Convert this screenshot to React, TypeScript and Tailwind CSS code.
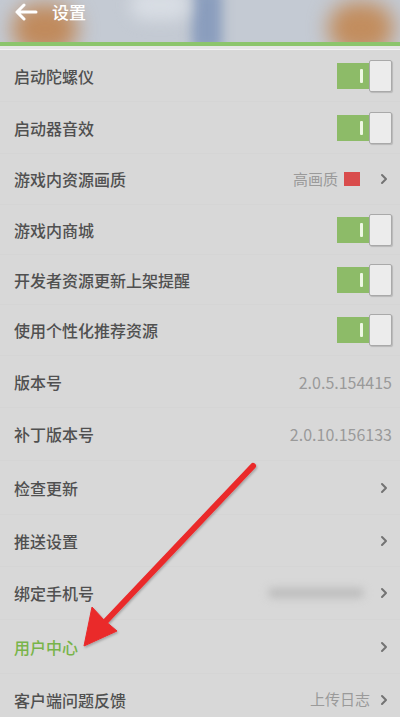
import { ChevronRight } from "lucide-react";

type Row = {
  label: string;
  kind: "toggle" | "value" | "link";
  h: string;
  value?: string;
  green?: boolean;
  quality?: boolean;
  blur?: boolean;
};

const rows: Row[] = [
  { label: "启动陀螺仪", kind: "toggle", h: "h-[52px]" },
  { label: "启动器音效", kind: "toggle", h: "h-[52px]" },
  { label: "游戏内资源画质", kind: "link", value: "高画质", quality: true, h: "h-[51px]" },
  { label: "游戏内商城", kind: "toggle", h: "h-[50px]" },
  { label: "开发者资源更新上架提醒", kind: "toggle", h: "h-[50px]" },
  { label: "使用个性化推荐资源", kind: "toggle", h: "h-[51px]" },
  { label: "版本号", kind: "value", value: "2.0.5.154415", h: "h-[52px]" },
  { label: "补丁版本号", kind: "value", value: "2.0.10.156133", h: "h-[53px]" },
  { label: "检查更新", kind: "link", h: "h-[54px]" },
  { label: "推送设置", kind: "link", h: "h-[52px]" },
  { label: "绑定手机号", kind: "link", blur: true, h: "h-[53px]" },
  { label: "用户中心", kind: "link", green: true, h: "h-[54px]" },
  { label: "客户端问题反馈", kind: "link", value: "上传日志", h: "h-[52px]" },
];

function Toggle() {
  return (
    <div className="flex items-center">
      <div className="w-[33px] h-[26px] bg-[#8dbb68] flex items-center justify-end pr-[7px]">
        <div className="w-[3px] h-[14px] bg-[#eef7e2] rounded-[1px]" />
      </div>
      <div className="w-[23px] h-[32px] bg-[#ececec] border border-[#a9a9a9] rounded-[2px] -ml-[1px] shadow-[1px_1px_1px_rgba(0,0,0,0.15)]" />
    </div>
  );
}

function Chevron() {
  return <ChevronRight className="w-[16px] h-[16px] text-[#737373]" strokeWidth={3} />;
}

function Arrow() {
  // annotation arrow drawn over the list
  return (
    <svg className="absolute left-0 top-0 pointer-events-none" width="400" height="717">
      <defs>
        <filter id="sh" x="-10%" y="-10%" width="120%" height="120%">
          <feDropShadow dx="1" dy="1.5" stdDeviation="1.2" floodColor="#000" floodOpacity="0.25" />
        </filter>
      </defs>
      <g filter="url(#sh)" fill="#ea2a2c" stroke="#ea2a2c">
        <line x1="253" y1="466" x2="106" y2="621" strokeWidth="6" strokeLinecap="round" />
        <polygon points="84,646 92,607 104,620 117,631" strokeWidth="1" strokeLinejoin="round" />
      </g>
    </svg>
  );
}

export default function App() {
  return (
    <div
      className="relative w-[400px] h-[717px] overflow-hidden bg-[#d8d8d8]"
      style={{ fontFamily: '"Noto Sans CJK SC", "Noto Sans", sans-serif' }}
    >
      {/* header */}
      <div className="relative h-[42px] overflow-hidden bg-[#c4cad3]">
        <div className="absolute left-[12px] top-[4px] w-[66px] h-[50px] rounded-[30px] bg-[#c08a5c] blur-[10px]" />
        <div className="absolute left-[328px] top-[2px] w-[66px] h-[52px] rounded-[30px] bg-[#c28d5e] blur-[10px]" />
        <div className="absolute left-[192px] top-[-10px] w-[30px] h-[60px] bg-[#8a9dbd] blur-[6px]" />
        <div className="absolute left-[130px] top-[-10px] w-[60px] h-[30px] rounded-full bg-[#d8dde4] blur-[8px]" />
        <div className="relative flex items-center h-[24px] pl-[14px] gap-[14px] text-white">
          <svg width="24" height="18" viewBox="0 0 24 18" fill="none" stroke="#fff" strokeWidth="3" strokeLinecap="round" strokeLinejoin="round">
            <path d="M22 9H3M10 2L3 9l7 7" />
          </svg>
          <span className="text-[17px] font-medium">设置</span>
        </div>
      </div>
      <div className="h-[4px] bg-[#8cc56c]" />
      <div className="h-[4px] bg-[#e6e6e6] border-b border-[#f3f3f3]" />

      {/* list */}
      <div className="flex flex-col">
        {rows.map((r) => (
          <div
            key={r.label}
            className={`${r.h} shrink-0 flex items-center justify-between pl-[14px] pr-[8px] border-b border-[#d5d5d5]`}
          >
            <span className={`text-[16px] font-medium ${r.green ? "text-[#78b44a]" : "text-[#505050]"}`}>
              {r.label}
            </span>
            {r.kind === "toggle" && <Toggle />}
            {r.kind === "value" && <span className="text-[16px] text-[#9a9a9a]">{r.value}</span>}
            {r.kind === "link" && (
              <div className="flex items-center gap-[6px]">
                {r.value && <span className="text-[15px] text-[#9a9a9a]">{r.value}</span>}
                {r.quality && <div className="w-[16px] h-[14px] bg-[#d94c4c] mr-[10px]" />}
                {r.blur && <div className="w-[96px] h-[10px] rounded-full bg-[#bcbcbc] blur-[4px] mr-[6px]" />}
                <Chevron />
              </div>
            )}
          </div>
        ))}
      </div>

      <Arrow />
    </div>
  );
}
